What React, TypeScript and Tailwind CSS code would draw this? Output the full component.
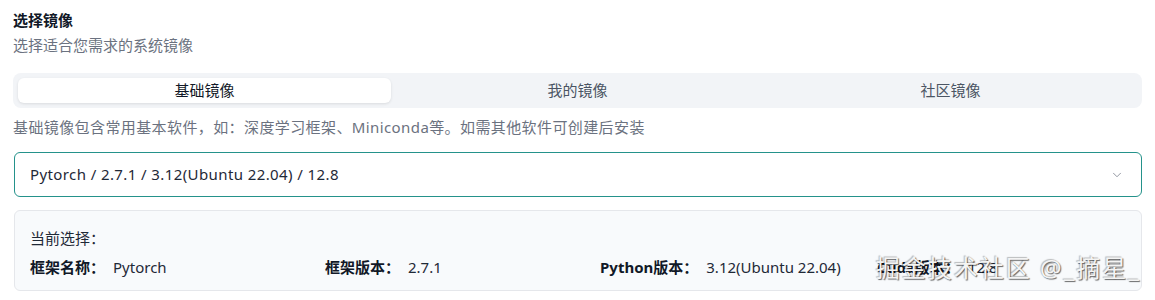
import { useState } from "react";
import { ChevronDown } from "lucide-react";

const TABS = ["基础镜像", "我的镜像", "社区镜像"];

const FONT = "[font-family:'Noto_Sans','Noto_Sans_CJK_SC',sans-serif]";

export default function App() {
  const [tab, setTab] = useState(0);

  return (
    <div className={`relative w-[1155px] h-[300px] bg-white px-[13px] pt-[10px] text-[15px] ${FONT}`}>
      <h2 className="text-[15px] leading-5 font-bold text-[#111827]">选择镜像</h2>
      <p className="mt-[5px] leading-5 text-[#6b7280]">选择适合您需求的系统镜像</p>

      <div className="mt-[18px] grid grid-cols-3 rounded-lg bg-[#f2f4f7] p-[5px]">
        {TABS.map((t, i) => (
          <button
            key={t}
            type="button"
            onClick={() => setTab(i)}
            className={
              "h-[25px] rounded-md leading-[25px] text-[15px] " +
              (tab === i
                ? "bg-white text-[#111827] shadow-[0_1px_3px_rgba(0,0,0,0.1)]"
                : "text-[#4b5563]")
            }
          >
            {t}
          </button>
        ))}
      </div>

      <p className="mt-[9px] leading-5 tracking-[0.4px] text-[#6b7280]">
        基础镜像包含常用基本软件，如：深度学习框架、Miniconda等。如需其他软件可创建后安装
      </p>

      <div className="mt-[15px] ml-px flex h-[45px] items-center justify-between rounded-md border border-[#24928b] bg-white pl-[15px] pr-[17px]">
        <span className="tracking-[0.4px] text-[#1f2937]">Pytorch / 2.7.1 / 3.12(Ubuntu 22.04) / 12.8</span>
        <ChevronDown className="h-[14px] w-[14px] text-[#6b7280]" strokeWidth={1.25} />
      </div>

      <div className="mt-[13px] ml-px h-[81px] rounded-md border border-[#e5e7eb] bg-[#f8fafc] px-[15px] pt-[17px]">
        <p className="leading-5 text-[#1f2937]">当前选择：</p>
        <div className="mt-[9px] grid grid-cols-[295px_275px_277px_1fr] leading-5 text-[#1f2937]">
          <div><span className="font-bold text-[#111827]">框架名称：</span><span className="ml-2">Pytorch</span></div>
          <div><span className="font-bold text-[#111827]">框架版本：</span><span className="ml-2">2.7.1</span></div>
          <div><span className="font-bold text-[#111827]">Python版本：</span><span className="ml-2">3.12(Ubuntu 22.04)</span></div>
          <div><span className="font-bold text-[#111827]">Cuda版本：</span><span className="ml-2">12.8</span></div>
        </div>
      </div>

      {/* 水印 */}
      <div className="pointer-events-none absolute right-[14px] top-[252px] text-[24px] leading-8 tracking-[2px] text-[#f4f4f4] [text-shadow:1px_1px_1px_rgba(0,0,0,0.6),-1px_-1px_1px_rgba(0,0,0,0.25)]">
        掘金技术社区 @_摘星_
      </div>
    </div>
  );
}
